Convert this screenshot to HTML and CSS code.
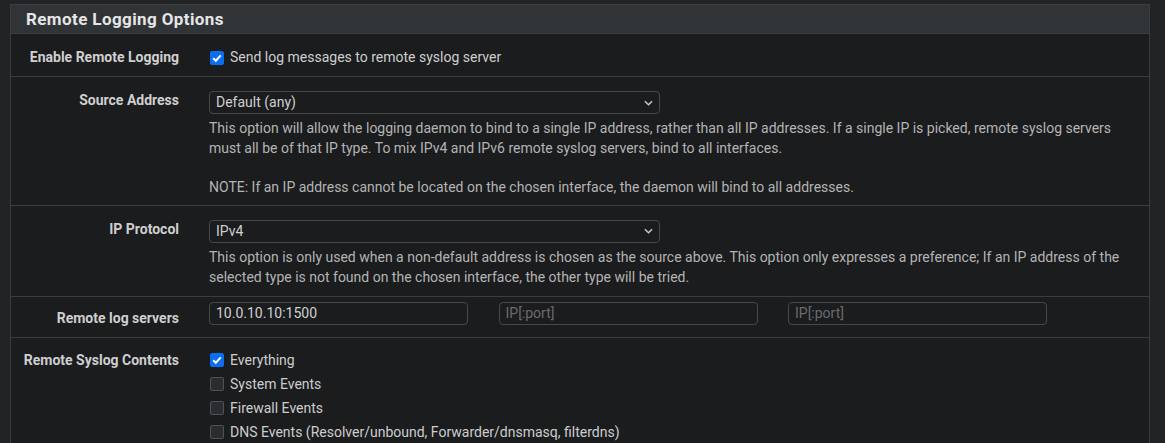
FILE: index.html
```html
<!DOCTYPE html>
<html>
<head>
<meta charset="utf-8">
<link rel="stylesheet" href="styles.css">
</head>
<body>
<div class="panel">
  <div class="panel-heading">Remote Logging Options</div>
  <div class="panel-body">
    <div class="row row-check">
      <div class="label">Enable Remote Logging</div>
      <div class="content">
        <label class="check"><span class="box checked"><svg viewBox="0 0 14 14"><path d="M3.2 7.2 L5.8 9.8 L10.8 4.4" /></svg></span>Send log messages to remote syslog server</label>
      </div>
    </div>
    <div class="row row-source">
      <div class="label">Source Address</div>
      <div class="content">
        <div class="select">Default (any)<svg class="chev" viewBox="0 0 10 6"><path d="M1 1 L5 5 L9 1"/></svg></div>
        <div class="help">This option will allow the logging daemon to bind to a single IP address, rather than all IP addresses. If a single IP is picked, remote syslog servers must all be of that IP type. To mix IPv4 and IPv6 remote syslog servers, bind to all interfaces.<br><br>NOTE: If an IP address cannot be located on the chosen interface, the daemon will bind to all addresses.</div>
      </div>
    </div>
    <div class="row row-proto">
      <div class="label">IP Protocol</div>
      <div class="content">
        <div class="select">IPv4<svg class="chev" viewBox="0 0 10 6"><path d="M1 1 L5 5 L9 1"/></svg></div>
        <div class="help">This option is only used when a non-default address is chosen as the source above. This option only expresses a preference; If an IP address of the selected type is not found on the chosen interface, the other type will be tried.</div>
      </div>
    </div>
    <div class="row row-servers">
      <div class="label">Remote log servers</div>
      <div class="content servers">
        <div class="input">10.0.10.10:1500</div>
        <div class="input placeholder">IP[:port]</div>
        <div class="input placeholder">IP[:port]</div>
      </div>
    </div>
    <div class="row row-contents">
      <div class="label">Remote Syslog Contents</div>
      <div class="content checks">
        <label class="check"><span class="box checked"><svg viewBox="0 0 14 14"><path d="M3.2 7.2 L5.8 9.8 L10.8 4.4" /></svg></span>Everything</label>
        <label class="check"><span class="box"></span>System Events</label>
        <label class="check"><span class="box"></span>Firewall Events</label>
        <label class="check"><span class="box"></span>DNS Events (Resolver/unbound, Forwarder/dnsmasq, filterdns)</label>
      </div>
    </div>
  </div>
</div>
</body>
</html>
```

FILE: styles.css
```css
html, body {
  margin: 0;
  padding: 0;
  background: #222325;
  font-family: Roboto, "Liberation Sans", sans-serif;
  font-size: 14px;
  color: #c9c9c9;
  overflow: hidden;
}
body {
  padding: 4px 15px 0 10px;
}
.panel {
  border: 1px solid #3b3d40;
  border-bottom: none;
  background: #1b1c1e;
}
.panel-heading {
  background: #313437;
  color: #e6e6e6;
  font-weight: bold;
  font-size: 17px;
  letter-spacing: 0.4px;
  height: 28px;
  line-height: 28px;
  padding-left: 15px;
  border-bottom: 1px solid #3b3d40;
}
.row {
  display: grid;
  grid-template-columns: 183px 1fr;
  border-bottom: 1px solid #3b3d40;
}
.row-check { padding: 13px 0 9px; }
.row-source { padding: 14px 0 7.6px; }
.row-proto { padding: 14px 0 8.8px; }
.row-servers { padding: 11px 0 9px; }
.row-contents {
  padding: 12px 0 20px;
  border-bottom: none;
}
.label {
  text-align: right;
  padding-right: 15px;
  font-weight: bold;
  color: #cfcfcf;
  line-height: 20px;
  font-size: 14px;
}
.row-source .label, .row-proto .label {
  margin-top: -1px;
}
.content {
  padding: 0 15px;
  min-width: 0;
}
.check {
  display: flex;
  align-items: center;
  height: 20px;
  color: #cdcdcd;
}
.box {
  width: 14px;
  height: 14px;
  box-sizing: border-box;
  border-radius: 2px;
  margin: 1px 6px 0 1px;
  background: #2b2c30;
  border: 1px solid #505257;
  flex: none;
  display: flex;
  align-items: center;
  justify-content: center;
}
.box.checked {
  background: #0b6ef0;
  border-color: #0b6ef0;
}
.box svg {
  width: 14px;
  height: 14px;
  flex: none;
  fill: none;
  stroke: #ffffff;
  stroke-width: 2;
}
.select {
  width: 451px;
  height: 23px;
  box-sizing: border-box;
  border: 1px solid #46484c;
  border-radius: 4px;
  padding: 0 6px;
  line-height: 21px;
  color: #cfcfcf;
  display: flex;
  align-items: center;
  justify-content: space-between;
}
.chev {
  width: 9px;
  height: 6px;
  fill: none;
  stroke: #c8c8c8;
  stroke-width: 1.6;
}
.help {
  margin-top: 5px;
  line-height: 19.6px;
  color: #b4b4b4;
}
.servers {
  display: flex;
  gap: 30.5px;
  margin-top: -6px;
  height: 23px;
}
.input {
  width: 259px;
  height: 23px;
  box-sizing: border-box;
  border: 1px solid #46484c;
  border-radius: 4px;
  padding: 0 6px;
  line-height: 21px;
  color: #d0d0d0;
}
.input.placeholder {
  color: #6b6b6b;
}
.checks {
  margin-top: -2px;
}
.checks .check {
  height: 24px;
}
```
